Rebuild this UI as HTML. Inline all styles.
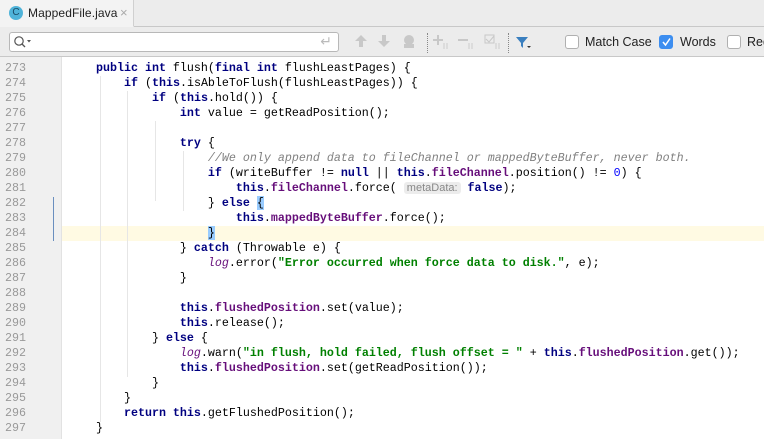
<!DOCTYPE html>
<html><head><meta charset="utf-8"><style>
*{margin:0;padding:0;box-sizing:border-box}
body{width:764px;height:439px;overflow:hidden;background:#fff;font-family:"Liberation Sans",sans-serif;position:relative}
.tabbar{position:absolute;left:0;top:0;width:764px;height:27px;background:#ececec;border-bottom:1px solid #c8c8c8}
.tab{position:absolute;left:0;top:0;width:134px;height:27px;background:#f3f3f3;border-right:1px solid #d0d0d0;border-bottom:1px solid #f3f3f3}
.cic{position:absolute;left:9px;top:6px;width:14px;height:14px;border-radius:50%;background:#4fb3d9;color:#1a4a66;font-size:10px;text-align:center;line-height:14px}
.tabt{position:absolute;left:28px;top:6px;font-size:12px;color:#222;letter-spacing:0.1px}
.tabx{position:absolute;left:120px;top:5px;font-size:13px;color:#aaa}
.sbar{position:absolute;left:0;top:27px;width:764px;height:30px;background:#ececec;border-bottom:1px solid #c8c8c8}
.sin{position:absolute;left:9px;top:5px;width:330px;height:20px;background:#fff;border:1px solid #b8b8b8;border-radius:3px}
.code{position:absolute;left:0;top:57px;width:764px;height:382px}
.gut{position:absolute;left:0;top:0;width:62px;height:382px;background:#f0f0f0;border-right:1px solid #e2e2e2}
.ln{position:absolute;left:0;width:26px;text-align:right;color:#999;font:11.67px "Liberation Mono",monospace;line-height:15px}
.l{position:absolute;left:68px;white-space:pre;font:11.67px "Liberation Mono",monospace;line-height:15px;color:#000}
.k{color:#000080;font-weight:bold}.f{color:#660e7a;font-weight:bold}.s{color:#008000;font-weight:bold}
.c{color:#808080;font-style:italic}.lg{color:#660e7a;font-style:italic}.n{color:#0000ff}
.b{background:#99ccff}
.g{position:absolute;width:1px;background:#e6e6e6}
.hint{background:#ececec;color:#888;font-family:"Liberation Sans",sans-serif;font-size:11px;border-radius:3px;padding:0 3px}
.cb{position:absolute;top:8px;width:14px;height:14px;border:1px solid #b0b0b0;border-radius:3px;background:#fff}
.lab{position:absolute;top:8px;font-size:12.5px;color:#222}
.ic{position:absolute;top:7px}
</style></head><body>
<div class="tabbar"><div class="tab"><div class="cic">C</div><div class="tabt">MappedFile.java</div><div class="tabx">×</div></div></div>
<div class="sbar">
<div class="sin"><svg style="position:absolute;left:3px;top:2px" width="20" height="14"><circle cx="6" cy="6" r="4.2" stroke="#555" stroke-width="1.2" fill="none"/><path d="M9 9l3 3" stroke="#555" stroke-width="1.3"/><path d="M14 5h4l-2 2.5z" fill="#555"/></svg><span style="position:absolute;right:6px;top:0px;font-size:14px;color:#bbb">↵</span></div>
<svg class="ic" style="left:354px" width="14" height="14"><path d="M7 1L13 7H9V13H5V7H1Z" fill="#c8c8c8"/></svg>
<svg class="ic" style="left:377px" width="14" height="14"><path d="M7 13L13 7H9V1H5V7H1Z" fill="#c8c8c8"/></svg>
<svg class="ic" style="left:401px" width="16" height="16"><circle cx="8" cy="6" r="5" fill="#c8c8c8"/><rect x="3" y="10" width="10" height="4" fill="#c8c8c8"/></svg>
<div style="position:absolute;left:427px;top:6px;height:20px;border-left:1px dotted #888"></div>
<svg class="ic" style="left:433px" width="18" height="16"><path d="M5 1v10M0 6h10" stroke="#c8c8c8" stroke-width="2"/><path d="M11 9v6M14 9v6" stroke="#ccc"/></svg>
<svg class="ic" style="left:458px" width="18" height="16"><path d="M0 6h10" stroke="#c8c8c8" stroke-width="2"/><path d="M11 9v6M14 9v6" stroke="#ccc"/></svg>
<svg class="ic" style="left:484px" width="18" height="16"><rect x="1" y="1" width="9" height="8" fill="none" stroke="#c8c8c8"/><path d="M2 5l3 3 5-6" stroke="#c8c8c8" fill="none"/><path d="M12 9v6M15 9v6" stroke="#ccc"/></svg>
<div style="position:absolute;left:508px;top:6px;height:20px;border-left:1px dotted #888"></div>
<svg style="position:absolute;left:515px;top:9px" width="16" height="14"><path d="M1 1H13L8 7V12L6 10V7Z" fill="#3a7fbf"/><path d="M12 10h4l-2 2z" fill="#333"/></svg>
<div class="cb" style="left:565px"></div><span class="lab" style="left:585px">Match Case</span>
<div class="cb" style="left:659px;background:#3d8ef0;border-color:#3d8ef0"><svg width="12" height="12" style="position:absolute;left:0;top:0"><path d="M3 6l2.5 3L10 2.5" stroke="#fff" stroke-width="1.5" fill="none"/></svg></div><span class="lab" style="left:680px">Words</span>
<div class="cb" style="left:727px"></div><span class="lab" style="left:747px">Reg</span>
</div>
<div class="code">
<div style="position:absolute;left:0;top:169px;width:764px;height:15px;background:#fffae3"></div>
<div class="gut"></div>
<div style="position:absolute;left:53px;top:140px;width:1px;height:44px;background:#6a8fbf"></div>
<div class="g" style="left:100px;top:19px;height:346px"></div>
<div class="g" style="left:127px;top:34px;height:286px"></div>
<div class="g" style="left:155px;top:64px;height:80px"></div>
<div class="g" style="left:183px;top:94px;height:60px"></div>
<div id="c"></div>
</div>
<script>
var L=[
'    <span class="k">public int</span> flush(<span class="k">final int</span> flushLeastPages) {',
'        <span class="k">if</span> (<span class="k">this</span>.isAbleToFlush(flushLeastPages)) {',
'            <span class="k">if</span> (<span class="k">this</span>.hold()) {',
'                <span class="k">int</span> value = getReadPosition();',
'',
'                <span class="k">try</span> {',
'                    <span class="c">//We only append data to fileChannel or mappedByteBuffer, never both.</span>',
'                    <span class="k">if</span> (writeBuffer != <span class="k">null</span> || <span class="k">this</span>.<span class="f">fileChannel</span>.position() != <span class="n">0</span>) {',
'                        <span class="k">this</span>.<span class="f">fileChannel</span>.force( <span class="hint">metaData:</span> <span class="k">false</span>);',
'                    } <span class="k">else</span> <span class="b">{</span>',
'                        <span class="k">this</span>.<span class="f">mappedByteBuffer</span>.force();',
'                    <span class="b">}</span>',
'                } <span class="k">catch</span> (Throwable e) {',
'                    <span class="lg">log</span>.error(<span class="s">"Error occurred when force data to disk."</span>, e);',
'                }',
'',
'                <span class="k">this</span>.<span class="f">flushedPosition</span>.set(value);',
'                <span class="k">this</span>.release();',
'            } <span class="k">else</span> {',
'                <span class="lg">log</span>.warn(<span class="s">"in flush, hold failed, flush offset = "</span> + <span class="k">this</span>.<span class="f">flushedPosition</span>.get());',
'                <span class="k">this</span>.<span class="f">flushedPosition</span>.set(getReadPosition());',
'            }',
'        }',
'        <span class="k">return this</span>.getFlushedPosition();',
'    }'];
var h='';for(var i=0;i<L.length;i++){var t=3.5+i*15.04;h+='<div class="ln" style="top:'+t+'px">'+(273+i)+'</div><div class="l" style="top:'+t+'px">'+L[i]+'</div>';}
document.getElementById('c').innerHTML=h;
</script>
</body></html>
